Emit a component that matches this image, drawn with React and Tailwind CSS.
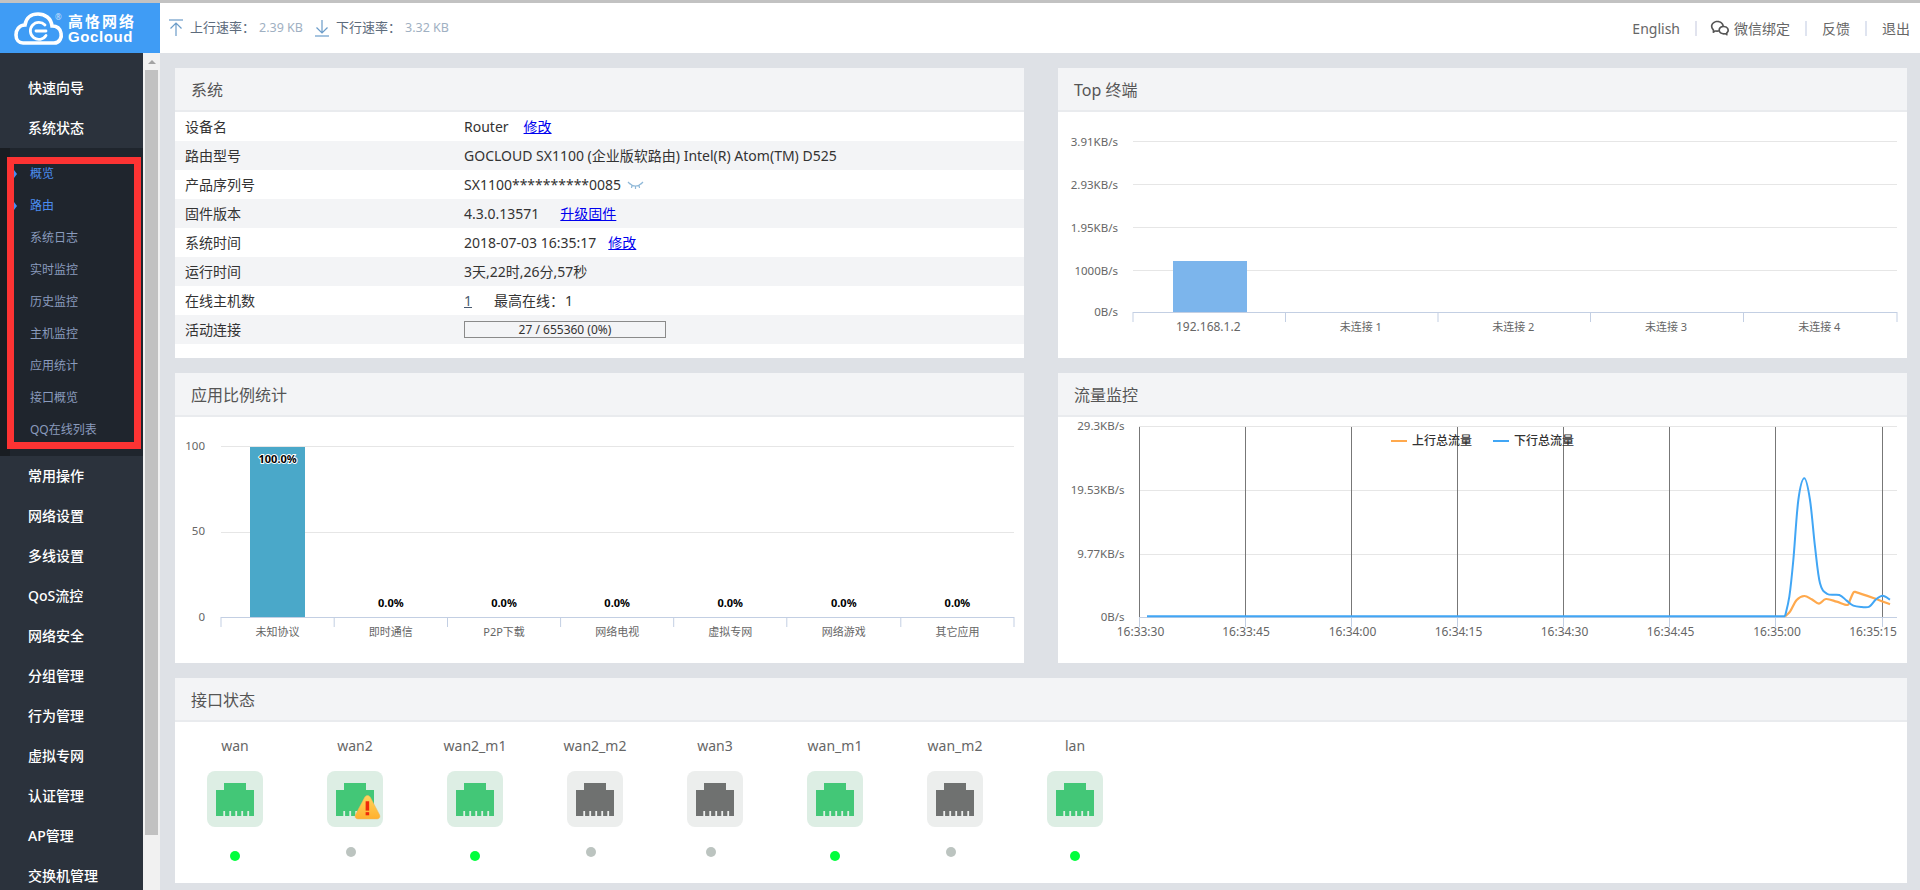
import { RiWechatLine } from 'react-icons/ri';

const subMenu = ['概览', '路由', '系统日志', '实时监控', '历史监控', '主机监控', '应用统计', '接口概览', 'QQ在线列表'];
const lowerMenu = ['常用操作', '网络设置', '多线设置', 'QoS流控', '网络安全', '分组管理', '行为管理', '虚拟专网', '认证管理', 'AP管理', '交换机管理'];
const ports = [
  { name: 'wan', up: true },
  { name: 'wan2', up: true, warn: true },
  { name: 'wan2_m1', up: true },
  { name: 'wan2_m2' },
  { name: 'wan3' },
  { name: 'wan_m1', up: true },
  { name: 'wan_m2' },
  { name: 'lan', up: true },
];

// catmull-rom so the traffic lines come out smooth
function smooth(pts) {
  let d = `M${pts[0][0]} ${pts[0][1]}`;
  for (let i = 0; i < pts.length - 1; i++) {
    const p0 = pts[i - 1] || pts[i];
    const p1 = pts[i];
    const p2 = pts[i + 1];
    const p3 = pts[i + 2] || p2;
    const c1x = p1[0] + (p2[0] - p0[0]) / 6;
    const c1y = p1[1] + (p2[1] - p0[1]) / 6;
    const c2x = p2[0] - (p3[0] - p1[0]) / 6;
    const c2y = p2[1] - (p3[1] - p1[1]) / 6;
    d += ` C${c1x} ${c1y} ${c2x} ${c2y} ${p2[0]} ${p2[1]}`;
  }
  return d;
}

const zoomPts = (list) => list.map(([x, y]) => [1740 + x / 3, 450 + y / 3]);
const bluePts = zoomPts([[135, 499], [148, 440], [160, 330], [175, 150], [193, 85], [210, 150], [225, 290], [240, 400], [262, 432], [298, 435], [320, 452], [340, 467], [365, 471], [388, 470], [408, 448], [428, 437], [450, 449]]);
const orangePts = zoomPts([[135, 499], [150, 485], [170, 450], [193, 438], [215, 448], [237, 461], [258, 447], [290, 455], [322, 465], [330, 450], [340, 428], [350, 427], [400, 444], [450, 463]]);

function Logo() {
  return (
    <div className="flex w-[160px] items-center bg-[#3f9cf5] pl-[13px] text-white">
      <svg width="52" height="50" viewBox="12 3 52 50" fill="none" stroke="white" strokeLinecap="round">
        <path d="M22 43 H53 C59 43 61 37 60 33 C59 28 55 26 51 26 C50 18 44 14 37 14 C30 14 25 18 24 25 C18 25 15 30 15 35 C15 40 18 43 22 43 Z" strokeWidth="3.6" />
        <path d="M44 25 A8.5 8.5 0 1 0 45 35.5" strokeWidth="2.8" />
        <path d="M35 31 H45" strokeWidth="2.8" />
      </svg>
      <div className="relative ml-[3px] flex flex-col">
        <span className="text-[15px] leading-[17px] font-bold tracking-[2px] whitespace-nowrap">高恪网络</span>
        <span className="text-[15px] leading-[13px] font-bold tracking-[0.6px] font-['Liberation_Sans',sans-serif]">Gocloud</span>
        <span className="absolute top-[-1px] left-[-13px] text-[8px] leading-[10px] opacity-70">®</span>
      </div>
    </div>
  );
}

function ArrowIcon({ down }) {
  return (
    <svg width="16" height="18" viewBox="0 0 16 18" fill="none" stroke="#6b9cc9" strokeWidth="1.2">
      {down ? (
        <>
          <path d="M8 1 V14 M2.5 8.5 L8 14 L13.5 8.5" />
          <path d="M1 17 H15" />
        </>
      ) : (
        <>
          <path d="M8 17 V4 M2.5 9.5 L8 4 L13.5 9.5" />
          <path d="M1 1 H15" />
        </>
      )}
    </svg>
  );
}

function Header() {
  return (
    <header className="flex h-[50px] shrink-0 bg-white">
      <Logo />
      <div className="flex flex-1 items-center pr-[10px] pl-[8px]">
        <ArrowIcon />
        <span className="ml-[6px] text-[13px] text-[#5d6b7c]">上行速率：</span>
        <span className="ml-[4px] w-[55px] text-[12.5px] text-[#9fb0c2]">2.39 KB</span>
        <ArrowIcon down />
        <span className="ml-[6px] text-[13px] text-[#5d6b7c]">下行速率：</span>
        <span className="ml-[4px] text-[12.5px] text-[#9fb0c2]">3.32 KB</span>
        <div className="ml-auto flex items-center text-[14px] text-[#666]">
          <span>English</span>
          <i className="mr-[13px] ml-[15px] h-[15px] w-[2px] bg-[#e1e3ee]" />
          <RiWechatLine className="mr-[4px] text-[20px] text-[#555]" />
          <span>微信绑定</span>
          <i className="mx-[15px] h-[15px] w-[2px] bg-[#dfe4f0]" />
          <span>反馈</span>
          <i className="mx-[15px] h-[15px] w-[2px] bg-[#dfe4f0]" />
          <span>退出</span>
        </div>
      </div>
    </header>
  );
}

function Sidebar() {
  return (
    <aside className="flex w-[143px] shrink-0 flex-col bg-[#2b323c] text-[14px] font-medium whitespace-nowrap text-white">
      <div className="pt-[15px]">
        {['快速向导', '系统状态'].map((m) => (
          <div key={m} className="flex h-[40px] items-center pb-[2px] pl-[28px]">{m}</div>
        ))}
      </div>
      <div className="relative border-l-[10px] border-[#191d22] bg-[#1f252d] py-[10px] text-[12px] font-normal text-[#8a9bbd]">
        {subMenu.map((m, i) => (
          <div key={m} className={`relative flex h-[32px] items-center pl-[20px] ${i < 2 ? 'text-[#4b8df0]' : ''}`}>
            {m}
          </div>
        ))}
        <div className="absolute top-[9px] left-[-3px] h-[292px] w-[134px] border-[7px] border-[#fd3333]" />
        <i className="absolute top-[22px] left-[4px] border-y-[4px] border-l-[3px] border-y-transparent border-l-[#4b8df0]" />
        <i className="absolute top-[54px] left-[4px] border-y-[4px] border-l-[3px] border-y-transparent border-l-[#4b8df0]" />
      </div>
      <div>
        {lowerMenu.map((m) => (
          <div key={m} className="flex h-[40px] items-center pb-[2px] pl-[28px]">{m}</div>
        ))}
      </div>
    </aside>
  );
}

function ScrollTrack() {
  return (
    <div className="flex w-[17px] shrink-0 flex-col items-center bg-[#f1f1f1]">
      <i className="mt-[7px] border-x-[4px] border-b-[4px] border-x-transparent border-b-[#a3a3a3]" />
      <div className="mt-[6px] h-[765px] w-[13px] bg-[#c1c1c1]" />
    </div>
  );
}

function Panel({ title, className = '', children }) {
  return (
    <section className={`bg-white ${className}`}>
      <h2 className="flex h-[44px] items-center border-b-2 border-[#e9ebee] bg-[#f3f4f6] pt-[2px] pl-[16px] text-[16px] font-normal text-[#555]">{title}</h2>
      {children}
    </section>
  );
}

const linkCls = 'text-[#0000ee] underline';

function SystemPanel() {
  const rows = [
    ['设备名', <>Router<a className={`${linkCls} ml-[15px]`}>修改</a></>],
    ['路由型号', 'GOCLOUD SX1100 (企业版软路由) Intel(R) Atom(TM) D525'],
    ['产品序列号', (
      <span className="flex items-center">
        SX1100**********0085
        <svg className="ml-[6px]" width="17" height="8" viewBox="0 0 17 8" fill="none" stroke="#8fb8d8" strokeWidth="1.2">
          <path d="M2 2 C6 6 11 6 15 2 M1 1 L3 3 M5 4 L4.5 7 M8.5 5 V8 M12 4 L12.5 7 M16 1 L14 3" />
        </svg>
      </span>
    )],
    ['固件版本', <>4.3.0.13571<a className={`${linkCls} ml-[21px]`}>升级固件</a></>],
    ['系统时间', <>2018-07-03 16:35:17<a className={`${linkCls} ml-[12px]`}>修改</a></>],
    ['运行时间', '3天,22时,26分,57秒'],
    ['在线主机数', <><span className="text-[#4a5a70] underline">1</span><span className="ml-[22px]">最高在线：</span><span className="ml-[1px]">1</span></>],
    ['活动连接', (
      <div className="flex h-[17px] w-[202px] items-center justify-center border border-[#8a8a8a] text-[12px]">27 / 655360 (0%)</div>
    )],
  ];
  return (
    <Panel title="系统" className="h-[290px]">
      {rows.map(([label, value], i) => (
        <div key={label} className={`flex h-[29px] items-center text-[14px] text-[#333] ${i % 2 ? 'bg-[#f3f4f6]' : ''}`}>
          <div className="w-[289px] pl-[10px]">{label}</div>
          <div>{value}</div>
        </div>
      ))}
    </Panel>
  );
}

function TopChart() {
  const ticks = [1133, 1285.5, 1438, 1590.5, 1743.5, 1897];
  const labels = ['192.168.1.2', '未连接 1', '未连接 2', '未连接 3', '未连接 4'];
  const grid = [[141.5, '3.91KB/s'], [184.5, '2.93KB/s'], [227.5, '1.95KB/s'], [270.5, '1000B/s']];
  return (
    <svg className="block" width="849" height="246" viewBox="1058 112 849 246">
      {grid.map(([y, t]) => (
        <g key={t}>
          <line x1="1133" x2="1897" y1={y} y2={y} stroke="#e6e6e6" />
          <text x="1118" y={y + 4} textAnchor="end" fontSize="11.5" fill="#666">{t}</text>
        </g>
      ))}
      <text x="1118" y="316" textAnchor="end" fontSize="11.5" fill="#666">0B/s</text>
      <rect x="1173" y="261" width="74" height="51" fill="#7cb5ec" />
      <line x1="1133" x2="1897" y1="312.5" y2="312.5" stroke="#c3cfe3" />
      {ticks.map((x) => <line key={x} x1={x} x2={x} y1="312" y2="322" stroke="#c3cfe3" />)}
      {labels.map((t, i) => (
        <text key={t} x={(ticks[i] + ticks[i + 1]) / 2 - 1} y="331" textAnchor="middle" fontSize={i ? 11 : 12} fill="#666">{t}</text>
      ))}
    </svg>
  );
}

function AppChart() {
  const ticks = [221, 334.2, 447.5, 560.6, 673.7, 786.8, 900.8, 1014];
  const labels = ['未知协议', '即时通信', 'P2P下载', '网络电视', '虚拟专网', '网络游戏', '其它应用'];
  return (
    <svg className="block" width="849" height="246" viewBox="175 417 849 246">
      <line x1="221" x2="1014" y1="446.5" y2="446.5" stroke="#e6e6e6" />
      <line x1="221" x2="1014" y1="532.5" y2="532.5" stroke="#e6e6e6" />
      <text x="205" y="450" textAnchor="end" fontSize="11.5" fill="#666">100</text>
      <text x="205" y="535" textAnchor="end" fontSize="11.5" fill="#666">50</text>
      <text x="205" y="621" textAnchor="end" fontSize="11.5" fill="#666">0</text>
      <rect x="250" y="447" width="55" height="170" fill="#4aa8c9" />
      <line x1="221" x2="1014" y1="617.5" y2="617.5" stroke="#c3cfe3" />
      {ticks.map((x) => <line key={x} x1={x} x2={x} y1="617" y2="627" stroke="#c3cfe3" />)}
      {labels.map((t, i) => {
        const cx = (ticks[i] + ticks[i + 1]) / 2;
        return (
          <g key={t}>
            <text x={cx} y={i ? 607 : 463} textAnchor="middle" fontSize="11" fontWeight="700" fill="#000" stroke="#fff" strokeWidth="2" paintOrder="stroke">{i ? '0.0%' : '100.0%'}</text>
            <text x={cx} y="636" textAnchor="middle" fontSize="11" fill="#666">{t}</text>
          </g>
        );
      })}
    </svg>
  );
}

function TrafficChart() {
  const vlines = [1139.5, 1245.5, 1351.5, 1457.5, 1563.5, 1669.5, 1775.5, 1882.5];
  const times = [[1140.5, '16:33:30'], [1246, '16:33:45'], [1352.5, '16:34:00'], [1458.5, '16:34:15'], [1564.5, '16:34:30'], [1670.5, '16:34:45'], [1777, '16:35:00'], [1873, '16:35:15']];
  const grid = [[426.5, '29.3KB/s'], [490.5, '19.53KB/s'], [554.5, '9.77KB/s'], [617.5, '0B/s']];
  return (
    <svg className="block" width="849" height="246" viewBox="1058 417 849 246">
      {grid.map(([y, t]) => (
        <g key={t}>
          <line x1="1139" x2="1897" y1={y} y2={y} stroke={y > 600 ? '#c3cfe3' : '#e6e6e6'} />
          <text x="1124.5" y={y + 3} textAnchor="end" fontSize="11.5" fill="#666">{t}</text>
        </g>
      ))}
      {vlines.map((x) => (
        <g key={x}>
          <line x1={x} x2={x} y1="427" y2="617" stroke="#777" />
          <line x1={x} x2={x} y1="617" y2="627" stroke="#c3cfe3" />
        </g>
      ))}
      {times.map(([x, t]) => <text key={t} x={x} y="636" textAnchor="middle" fontSize="12" fill="#666">{t}</text>)}
      <path d="M1391 441 H1407" stroke="#ffa94d" strokeWidth="2" />
      <text x="1412" y="445" fontSize="12" fontWeight="500" fill="#333">上行总流量</text>
      <path d="M1493 441 H1509" stroke="#41a6f5" strokeWidth="2" />
      <text x="1514" y="445" fontSize="12" fontWeight="500" fill="#333">下行总流量</text>
      <path d={smooth(orangePts)} fill="none" stroke="#ffa94d" strokeWidth="2.2" />
      <path d={smooth(bluePts)} fill="none" stroke="#41a6f5" strokeWidth="2" />
      <path d="M1147 616.3 H1785" stroke="#41a6f5" strokeWidth="2" />
    </svg>
  );
}

function PortIcon({ up }) {
  const color = up ? '#43c777' : '#6f7170';
  const gap = up ? '#ddeee4' : '#eceeed';
  return (
    <svg width="38" height="33" viewBox="0 0 38 33" className="block">
      <path d="M8 0 H30 V7 H38 V33 H0 V7 H8 Z" fill={color} />
      {[7.3, 13.3, 19.3, 25.3, 31.3].map((x) => <rect key={x} x={x} y="28" width="1.8" height="5" fill={gap} />)}
    </svg>
  );
}

function WarnBadge() {
  return (
    <svg className="absolute top-[23px] left-[27px]" width="27" height="27" viewBox="0 0 26 26">
      <defs>
        <linearGradient id="warnFill" x1="0" y1="0" x2="0" y2="1">
          <stop offset="0" stopColor="#ffd45c" />
          <stop offset="1" stopColor="#ffb02e" />
        </linearGradient>
      </defs>
      <path d="M13 1.5 C14 1.5 15 2 15.6 3 L24.6 20 C25.6 22 24.4 24 22.4 24 H3.6 C1.6 24 .4 22 1.4 20 L10.4 3 C11 2 12 1.5 13 1.5 Z" fill="url(#warnFill)" stroke="#efb35a" strokeWidth=".5" />
      <rect x="11.2" y="7" width="3.4" height="9" fill="#ee2a0a" />
      <rect x="11.2" y="17.5" width="3.4" height="3" fill="#ee2a0a" />
    </svg>
  );
}

function PortItem({ port }) {
  return (
    <div className="flex w-[120px] flex-col items-center">
      <div className="mt-[14px] text-[14px] leading-[20px] text-[#666]">{port.name}</div>
      <div className={`relative mt-[15px] flex h-[56px] w-[56px] items-center justify-center rounded-[8px] ${port.up ? 'bg-[#ddeee4]' : 'bg-[#eceeed]'}`}>
        <PortIcon up={port.up} />
        {port.warn && <WarnBadge />}
      </div>
      {port.warn || !port.up ? (
        <i className="mt-[20px] mr-[8px] h-[10px] w-[10px] rounded-full bg-[#bcc4c0]" />
      ) : (
        <i className="mt-[24px] h-[10px] w-[10px] rounded-full bg-[#00ff3c]" />
      )}
    </div>
  );
}

export default function App() {
  return (
    <div className="flex h-[890px] w-[1920px] flex-col overflow-hidden border-t-[3px] border-[#c2c2c2] bg-white font-['Noto_Sans','Noto_Sans_CJK_SC',sans-serif]">
      <Header />
      <div className="flex min-h-0 flex-1">
        <Sidebar />
        <ScrollTrack />
        <main className="grid flex-1 grid-cols-[849px_849px] content-start gap-x-[34px] gap-y-[15px] bg-[#dee1e6] pt-[15px] pl-[15px]">
          <SystemPanel />
          <Panel title="Top 终端" className="h-[290px]"><TopChart /></Panel>
          <Panel title="应用比例统计" className="h-[290px]"><AppChart /></Panel>
          <Panel title="流量监控" className="h-[290px]"><TrafficChart /></Panel>
          <Panel title="接口状态" className="col-span-2 h-[205px]">
            <div className="flex">
              {ports.map((p) => <PortItem key={p.name} port={p} />)}
            </div>
          </Panel>
        </main>
      </div>
    </div>
  );
}
